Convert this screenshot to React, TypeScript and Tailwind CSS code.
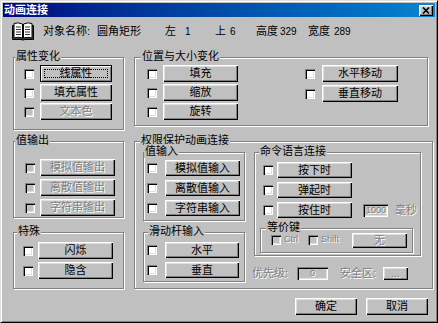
import type { ReactNode } from 'react'

const raised =
  'shadow-[inset_1px_1px_0_#fff,inset_-1px_-1px_0_#000,inset_-2px_-2px_0_#808080,inset_2px_2px_0_#dfdfdf]'
const sunken =
  'shadow-[inset_1px_1px_0_#808080,inset_2px_2px_0_#000,inset_-1px_-1px_0_#fff,inset_-2px_-2px_0_#dfdfdf]'
const dim = 'text-[#808080] [text-shadow:1px_1px_0_#fff]'

function Btn({
  children,
  className = '',
  disabled = false,
  focus = false,
}: {
  children: ReactNode
  className?: string
  disabled?: boolean
  focus?: boolean
}) {
  return (
    <div
      className={`relative flex shrink-0 items-center justify-center bg-[#c0c0c0] text-[11px] leading-none whitespace-nowrap ${
        focus
          ? 'border border-black shadow-[inset_1px_1px_0_#fff,inset_-1px_-1px_0_#808080]'
          : raised
      } ${disabled ? dim : 'text-black'} ${className}`}
    >
      {focus && <span className="absolute inset-[3px] border border-dotted border-black" />}
      {children}
    </div>
  )
}

function Check({ disabled = false }: { disabled?: boolean }) {
  return <div className={`h-[10px] w-[10px] shrink-0 ${disabled ? 'bg-[#c0c0c0]' : 'bg-white'} ${sunken}`} />
}

function Group({
  label,
  labelPos,
  className,
  children,
}: {
  label: string
  labelPos: string
  className: string
  children?: ReactNode
}) {
  return (
    <div className={`relative shrink-0 border border-[#808080] shadow-[inset_1px_1px_0_#fff,1px_1px_0_#fff] ${className}`}>
      <span className={`absolute -top-[9px] bg-[#c0c0c0] px-[1px] text-[11px] leading-[14px] whitespace-nowrap ${labelPos}`}>
        {label}
      </span>
      {children}
    </div>
  )
}

function BookIcon() {
  return (
    <svg width="22" height="20" viewBox="0 0 22 20">
      <path d="M0.5 4.5 L0.5 18.5 L9 18.5 Q11 19.5 13 18.5 L21.5 18.5 L21.5 4.5 Z" fill="#404040" stroke="#000" />
      <path d="M2 2.5 Q6 1 10.5 3 L10.5 17 Q6 15.5 2 17 Z" fill="#fff" stroke="#000" />
      <path d="M20 2.5 Q16 1 11.5 3 L11.5 17 Q16 15.5 20 17 Z" fill="#fff" stroke="#000" />
      <path
        d="M4 6 L9 6 M4 8.5 L9 8.5 M4 11 L9 11 M4 13.5 L9 13.5 M13 6 L18 6 M13 8.5 L18 8.5 M13 11 L18 11 M13 13.5 L18 13.5"
        stroke="#000"
        strokeWidth="0.8"
      />
    </svg>
  )
}

export default function App() {
  return (
    <div className="flex h-[323px] w-[438px] flex-col overflow-hidden border border-t-[#dfdfdf] border-r-black border-b-black border-l-[#dfdfdf] bg-[#c0c0c0] p-[2px] font-['Liberation_Sans','Noto_Sans_CJK_SC',sans-serif] text-[11px] text-black shadow-[inset_1px_1px_0_#fff,inset_-1px_-1px_0_#808080]">
      {/* title bar */}
      <div className="flex h-[14px] shrink-0 items-center justify-between bg-linear-to-r from-[#000080] to-[#1084d0] pr-[2px] pl-[1px]">
        <span className="text-[11px] leading-none font-bold text-white">动画连接</span>
        <div className={`flex h-[11px] w-[14px] items-center justify-center bg-[#c0c0c0] ${raised}`}>
          <svg width="8" height="7" viewBox="0 0 8 7">
            <path d="M1 0.5 L7 6.5 M7 0.5 L1 6.5" stroke="#000" strokeWidth="1.6" />
          </svg>
        </div>
      </div>

      {/* object info */}
      <div className="flex h-[28px] shrink-0 items-center pl-[9px] whitespace-nowrap">
        <BookIcon />
        <span className="ml-[9px] w-[54px] shrink-0">对象名称:</span>
        <span className="w-[68px] shrink-0">圆角矩形</span>
        <span className="w-[20px] shrink-0">左</span>
        <span className="w-[30px] shrink-0 text-[10px]">1</span>
        <span className="w-[15px] shrink-0">上</span>
        <span className="w-[26px] shrink-0 text-[10px]">6</span>
        <span className="w-[24px] shrink-0">高度</span>
        <span className="w-[28px] shrink-0 text-[10px]">329</span>
        <span className="w-[26px] shrink-0">宽度</span>
        <span className="text-[10px]">289</span>
      </div>

      {/* main */}
      <div className="flex shrink-0 pt-[12px] pl-[10px]">
        {/* left column */}
        <div className="flex w-[111px] shrink-0 flex-col">
          <Group label="属性变化" labelPos="left-[1px]" className="h-[73px] w-[111px]">
            <div className="flex flex-col gap-[2px] pt-[7px] pl-[10px]">
              <div className="flex items-center gap-[6px]">
                <Check />
                <Btn className="h-[17px] w-[72px]" focus>
                  线属性
                </Btn>
              </div>
              <div className="flex items-center gap-[6px]">
                <Check />
                <Btn className="h-[17px] w-[72px]">填充属性</Btn>
              </div>
              <div className="flex items-center gap-[6px]">
                <Check disabled />
                <Btn className="h-[17px] w-[72px]" disabled>
                  文本色
                </Btn>
              </div>
            </div>
          </Group>

          <Group label="值输出" labelPos="left-[1px]" className="mt-[11px] h-[77px] w-[111px]">
            <div className="flex flex-col gap-[3px] pt-[17px] pl-[11px]">
              {['模拟值输出', '离散值输出', '字符串输出'].map((t) => (
                <div key={t} className="flex items-center gap-[5px]">
                  <Check disabled />
                  <Btn className="h-[17px] w-[75px]" disabled>
                    {t}
                  </Btn>
                </div>
              ))}
            </div>
          </Group>

          <Group label="特殊" labelPos="left-[3px]" className="mt-[14px] h-[57px] w-[111px]">
            <div className="flex flex-col gap-[3px] pt-[9px] pl-[9px]">
              {['闪烁', '隐含'].map((t) => (
                <div key={t} className="flex items-center gap-[5px]">
                  <Check />
                  <Btn className="h-[17px] w-[75px]">{t}</Btn>
                </div>
              ))}
            </div>
          </Group>
        </div>

        {/* right column */}
        <div className="ml-[10px] flex shrink-0 flex-col">
          <Group label="位置与大小变化" labelPos="left-[6px]" className="h-[69px] w-[294px]">
            <div className="flex pt-[7px] pl-[12px]">
              <div className="flex flex-col gap-[2px]">
                {['填充', '缩放', '旋转'].map((t) => (
                  <div key={t} className="flex items-center gap-[6px]">
                    <Check />
                    <Btn className="h-[17px] w-[75px]">{t}</Btn>
                  </div>
                ))}
              </div>
              <div className="ml-[67px] flex flex-col gap-[3px]">
                {['水平移动', '垂直移动'].map((t) => (
                  <div key={t} className="flex items-center gap-[7px]">
                    <Check />
                    <Btn className="h-[17px] w-[76px]">{t}</Btn>
                  </div>
                ))}
              </div>
            </div>
          </Group>

          <Group label="权限保护动画连接" labelPos="left-[5px]" className="mt-[15px] h-[148px] w-[299px]">
            <div className="flex pt-[10px] pl-[8px]">
              {/* inputs */}
              <div className="flex flex-col">
                <Group label="值输入" labelPos="left-[0px]" className="h-[69px] w-[102px]">
                  <div className="flex flex-col gap-[4px] pt-[7px] pl-[3px]">
                    {['模拟值输入', '离散值输入', '字符串输入'].map((t) => (
                      <div key={t} className="flex items-center gap-[8px]">
                        <Check />
                        <Btn className="h-[16px] w-[75px]">{t}</Btn>
                      </div>
                    ))}
                  </div>
                </Group>
                <Group label="滑动杆输入" labelPos="left-[4px]" className="mt-[11px] h-[50px] w-[102px]">
                  <div className="flex flex-col gap-[4px] pt-[9px] pl-[3px]">
                    {['水平', '垂直'].map((t) => (
                      <div key={t} className="flex items-center gap-[8px]">
                        <Check />
                        <Btn className="h-[16px] w-[74px]">{t}</Btn>
                      </div>
                    ))}
                  </div>
                </Group>
              </div>

              {/* command language */}
              <div className="ml-[7px] flex flex-col">
                <Group label="命令语言连接" labelPos="left-[4px]" className="ml-[2px] h-[104px] w-[167px]">
                  <div className="flex flex-col pt-[9px] pl-[5px]">
                    <div className="flex flex-col gap-[4px] pl-[3px]">
                      <div className="flex items-center gap-[4px]">
                        <Check />
                        <Btn className="h-[16px] w-[75px]">按下时</Btn>
                      </div>
                      <div className="flex items-center gap-[4px]">
                        <Check />
                        <Btn className="h-[16px] w-[75px]">弹起时</Btn>
                      </div>
                      <div className="flex items-center gap-[4px]">
                        <Check />
                        <Btn className="h-[16px] w-[75px]">按住时</Btn>
                        <div
                          className={`ml-[7px] flex h-[13px] w-[25px] shrink-0 items-center pl-[3px] text-[9px] leading-none ${sunken} ${dim}`}
                        >
                          1000
                        </div>
                        <span className={`ml-[3px] whitespace-nowrap ${dim}`}>毫秒</span>
                      </div>
                    </div>
                    <Group label="等价键" labelPos="left-[5px]" className="mt-[9px] h-[25px] w-[153px]">
                      <div className="flex items-center pt-[4px] pl-[10px]">
                        <Check disabled />
                        <span className={`w-[27px] shrink-0 pl-[3px] text-[9px] ${dim}`}>Ctrl</span>
                        <Check disabled />
                        <span className={`w-[34px] shrink-0 pl-[3px] text-[9px] ${dim}`}>Shift</span>
                        <Btn className="h-[15px] w-[55px]" disabled>
                          无
                        </Btn>
                      </div>
                    </Group>
                  </div>
                </Group>

                <div className="mt-[11px] flex h-[13px] items-center whitespace-nowrap">
                  <span className={`w-[45px] shrink-0 ${dim}`}>优先级:</span>
                  <div
                    className={`flex h-[13px] w-[31px] shrink-0 items-center justify-center text-[9px] leading-none ${sunken} ${dim}`}
                  >
                    0
                  </div>
                  <span className={`ml-[12px] w-[43px] shrink-0 ${dim}`}>安全区:</span>
                  <Btn className="h-[13px] w-[25px] text-[9px]" disabled>
                    ...
                  </Btn>
                </div>
              </div>
            </div>
          </Group>
        </div>
      </div>

      {/* bottom buttons */}
      <div className="mt-[9px] flex shrink-0 justify-end gap-[9px] pr-[7px]">
        <Btn className="h-[17px] w-[62px]">确定</Btn>
        <Btn className="h-[17px] w-[62px]">取消</Btn>
      </div>
    </div>
  )
}
